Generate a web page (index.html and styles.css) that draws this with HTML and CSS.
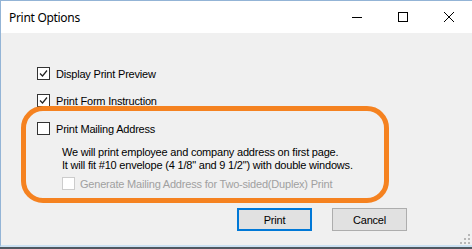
FILE: index.html
```html
<!DOCTYPE html>
<html lang="en">
<head>
    <meta charset="UTF-8">
    <meta name="viewport" content="width=device-width, initial-scale=1.0">
    <title>Print Options</title>
    <link rel="stylesheet" href="styles.css">
</head>
<body>
    <div class="window">
        <div class="titlebar">
            <span class="title">Print Options</span>
            <div class="caption-buttons">
                <span class="cap-btn">
                    <svg width="10" height="10" viewBox="0 0 10 10"><path d="M0 5.5H10" stroke="#000" stroke-width="1"/></svg>
                </span>
                <span class="cap-btn">
                    <svg width="10" height="10" viewBox="0 0 10 10"><rect x="0.5" y="0.5" width="9" height="9" fill="none" stroke="#000" stroke-width="1"/></svg>
                </span>
                <span class="cap-btn">
                    <svg width="10" height="10" viewBox="0 0 10 10"><path d="M0 0L10 10M10 0L0 10" stroke="#000" stroke-width="1"/></svg>
                </span>
            </div>
        </div>

        <div class="content">
            <label class="check-row row-preview">
                <span class="box"><svg width="11" height="11" viewBox="0 0 11 11"><path d="M2 5.5L4.5 8L9 2.5" fill="none" stroke="#222" stroke-width="1.2"/></svg></span>
                Display Print Preview
            </label>
            <label class="check-row row-instruction">
                <span class="box"><svg width="11" height="11" viewBox="0 0 11 11"><path d="M2 5.5L4.5 8L9 2.5" fill="none" stroke="#222" stroke-width="1.2"/></svg></span>
                Print Form Instruction
            </label>
            <label class="check-row row-mailing">
                <span class="box"></span>
                Print Mailing Address
            </label>
            <p class="note">
                We will print employee and company address on first page.<br>
                It will fit #10 envelope (4 1/8" and 9 1/2") with double windows.
            </p>
            <label class="check-row disabled">
                <span class="box"></span>
                Generate Mailing Address for Two-sided(Duplex) Print
            </label>

            <div class="actions">
                <button class="btn default">Print</button>
                <button class="btn">Cancel</button>
            </div>

            <!-- orange annotation drawn over the dialog -->
            <div class="highlight"></div>

            <svg class="grip" width="10" height="10" viewBox="0 0 10 10" fill="#b8b8b8">
                <rect x="8" y="0" width="2" height="2"/>
                <rect x="4" y="4" width="2" height="2"/>
                <rect x="8" y="4" width="2" height="2"/>
                <rect x="0" y="8" width="2" height="2"/>
                <rect x="4" y="8" width="2" height="2"/>
                <rect x="8" y="8" width="2" height="2"/>
            </svg>
        </div>
    </div>
</body>
</html>
```

FILE: styles.css
```css
html, body {
    margin: 0;
    padding: 0;
}
body {
    width: 472px;
    height: 249px;
    overflow: hidden;
    background-color: #4f5860;
    font-family: "Liberation Sans", Arial, sans-serif;
    font-size: 11px;
    letter-spacing: -0.2px;
    color: #000;
}
.window {
    box-sizing: border-box;
    width: 472px;
    height: 247px;
    border-top: 1px solid #93b4d6;
    border-left: 1px solid #93b4d6;
    border-bottom: 2px solid #cbe1f2;
    background-color: #f0f0f0;
    display: flex;
    flex-direction: column;
}
.titlebar {
    height: 32px;
    background-color: #fff;
    display: flex;
    align-items: center;
    justify-content: space-between;
}
.title {
    font-family: "Noto Sans", sans-serif;
    font-size: 12px;
    letter-spacing: -0.3px;
    padding-left: 8px;
    padding-top: 1px;
}
.caption-buttons {
    display: flex;
    height: 100%;
}
.cap-btn {
    width: 46px;
    height: 100%;
    display: flex;
    align-items: center;
    justify-content: center;
}
.content {
    flex: 1;
    position: relative;
    padding: 34px 0 0 36px;
    display: flex;
    flex-direction: column;
    align-items: flex-start;
}
.check-row {
    display: flex;
    align-items: center;
    height: 13px;
    line-height: 12px;
    gap: 6px;
}
.box {
    box-sizing: border-box;
    width: 13px;
    height: 13px;
    border: 1px solid #333;
    background-color: #fff;
    display: flex;
    align-items: center;
    justify-content: center;
}
.row-preview {
    margin-bottom: 14px;
}
.row-instruction {
    margin-bottom: 15px;
}
.note {
    margin: 11px 0 5px 25px;
    line-height: 13px;
}
.disabled {
    margin-left: 25px;
    color: #a0a0a0;
    gap: 5px;
}
.disabled .box {
    border-color: #cccccc;
}
.actions {
    align-self: stretch;
    display: flex;
    justify-content: flex-end;
    gap: 20px;
    margin-top: 18px;
    padding-right: 65px;
}
.btn {
    box-sizing: border-box;
    width: 75px;
    height: 23px;
    padding: 0;
    font-family: "Liberation Sans", Arial, sans-serif;
    font-size: 11px;
    letter-spacing: -0.2px;
    color: #000;
    background-color: #e1e1e1;
    border: 1px solid #adadad;
    border-radius: 0;
}
.btn.default {
    border: 2px solid #0078d7;
}
.highlight {
    position: absolute;
    box-sizing: border-box;
    left: 20px;
    top: 73px;
    width: 368px;
    height: 97px;
    border: 5px solid #f58220;
    border-radius: 22px;
    pointer-events: none;
}
.grip {
    position: absolute;
    right: 2px;
    bottom: 1px;
}
```
